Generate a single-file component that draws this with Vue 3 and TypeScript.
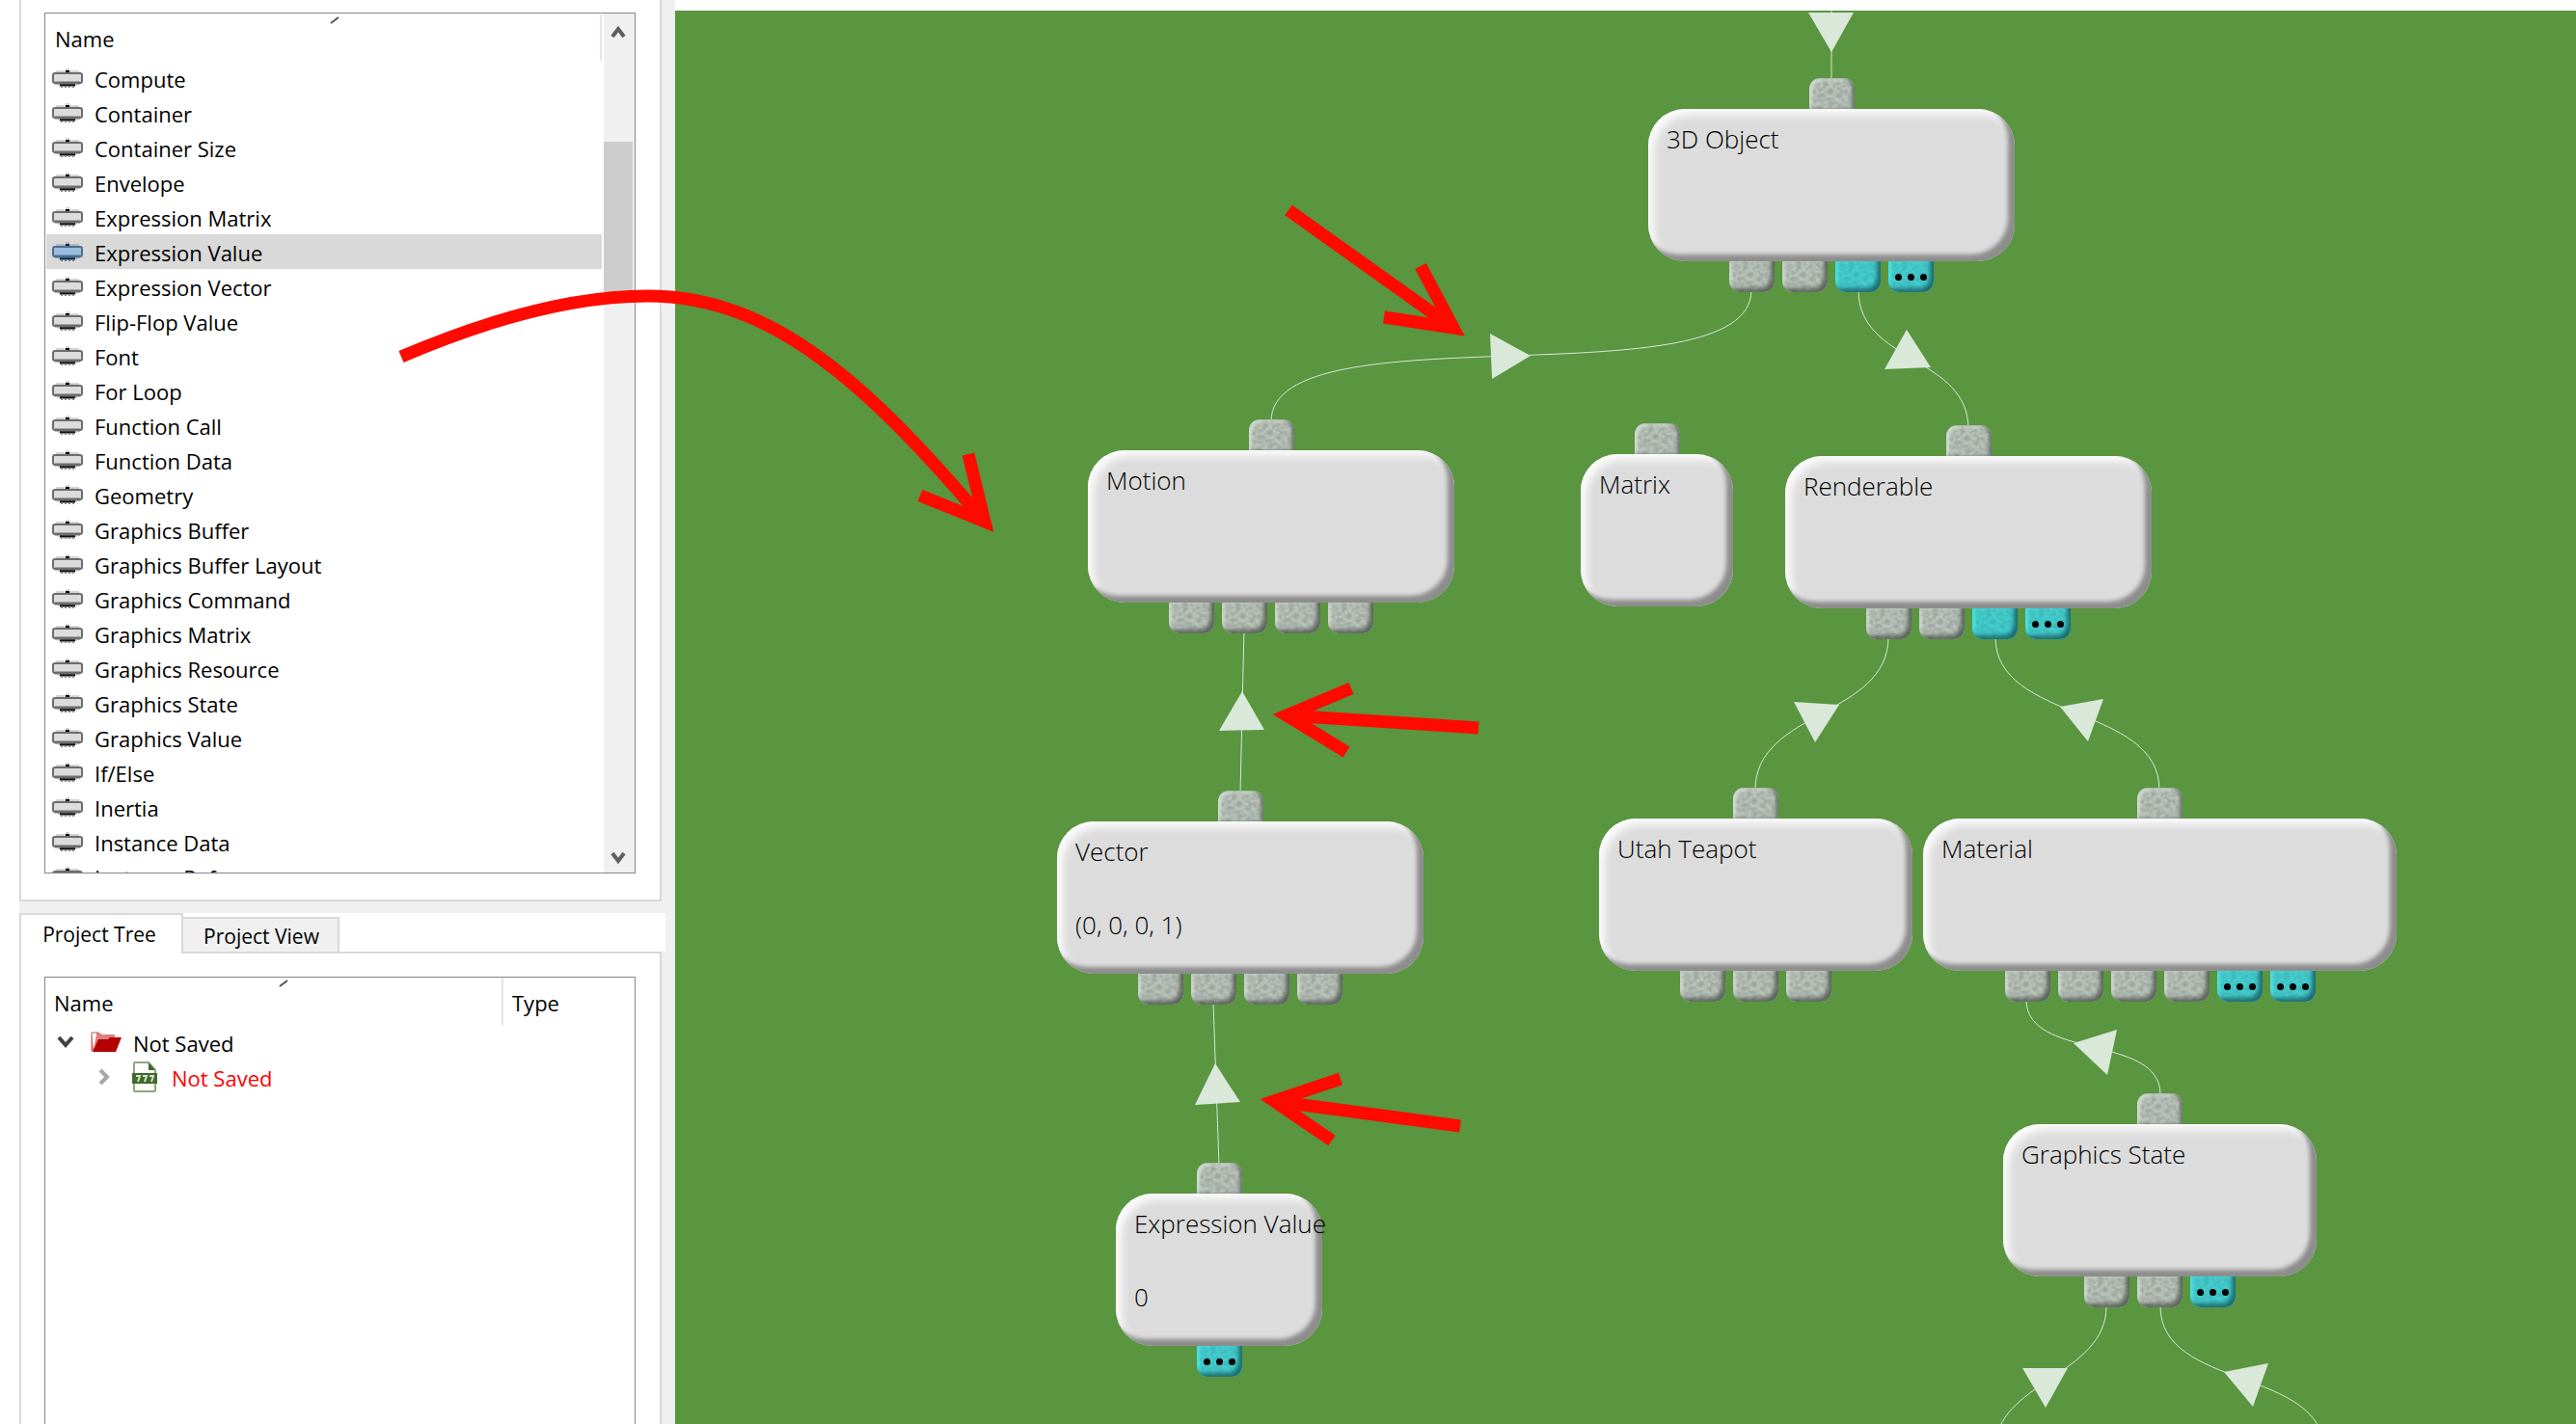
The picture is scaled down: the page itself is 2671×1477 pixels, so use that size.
<script setup lang="ts">
import { ref } from 'vue'

interface GraphNode {
  x: number
  y: number
  w: number
  title: string
  value?: string
  ports: string
}

interface Wire {
  from: [number, number]
  to: [number, number]
  bend: number
  arrow: string
}

const components: string[] = [
  'Compute', 'Container', 'Container Size', 'Envelope', 'Expression Matrix',
  'Expression Value', 'Expression Vector', 'Flip-Flop Value', 'Font', 'For Loop',
  'Function Call', 'Function Data', 'Geometry', 'Graphics Buffer',
  'Graphics Buffer Layout', 'Graphics Command', 'Graphics Matrix',
  'Graphics Resource', 'Graphics State', 'Graphics Value', 'If/Else', 'Inertia',
  'Instance Data', 'Instance Reference',
]
const selected = ref('Expression Value')
const tab = ref<'tree' | 'view'>('tree')

// Port codes: g = grey, c = cyan, m = cyan with more-dots
const nodes: GraphNode[] = [
  { x: 1009, y: 102, w: 380, title: '3D Object', ports: 'ggcm' },
  { x: 428, y: 456, w: 380, title: 'Motion', ports: 'gggg' },
  { x: 939, y: 460, w: 158, title: 'Matrix', ports: '' },
  { x: 1151, y: 462, w: 380, title: 'Renderable', ports: 'ggcm' },
  { x: 396, y: 841, w: 380, title: 'Vector', value: '(0, 0, 0, 1)', ports: 'gggg' },
  { x: 958, y: 838, w: 325, title: 'Utah Teapot', ports: 'ggg' },
  { x: 1294, y: 838, w: 491, title: 'Material', ports: 'ggggmm' },
  { x: 457, y: 1227, w: 214, title: 'Expression Value', value: '0', ports: 'm' },
  { x: 1377, y: 1155, w: 325, title: 'Graphics State', ports: 'ggm' },
]

const wires: Wire[] = [
  { from: [1199, 80], to: [1199, -20], bend: 0, arrow: '1175,2 1222,2 1199,43' },
  { from: [618, 426], to: [1116, 290], bend: 118, arrow: '845,335 887,358 847,382' },
  { from: [1341, 434], to: [1227, 290], bend: 76, arrow: '1277,331 1254,372 1302,370' },
  { from: [586, 812], to: [590, 640], bend: 0, arrow: '588,706 564,747 611,746' },
  { from: [1120, 808], to: [1258, 650], bend: 82, arrow: '1160,717 1207,720 1182,759' },
  { from: [1539, 808], to: [1369, 650], bend: 88, arrow: '1436,722 1481,714 1465,758' },
  { from: [564, 1198], to: [558, 1028], bend: 0, arrow: '560,1092 586,1132 539,1135' },
  { from: [1540, 1124], to: [1401, 1026], bend: 63, arrow: '1450,1071 1495,1057 1485,1104' },
  { from: [1368, 1494], to: [1484, 1344], bend: 72, arrow: '1397,1408 1444,1408 1421,1449' },
  { from: [1710, 1494], to: [1540, 1344], bend: 87, arrow: '1606,1412 1652,1403 1636,1448' },
]

function wirePath(w: Wire): string {
  const [x1, y1] = w.from
  const [x2, y2] = w.to
  return `M${x1} ${y1}C${x1} ${y1 - w.bend} ${x2} ${y2 + w.bend} ${x2} ${y2}`
}
</script>

<template>
  <div class="page">
    <svg class="defs" width="0" height="0" aria-hidden="true">
      <filter id="stone" x="0" y="0" width="1" height="1">
        <feTurbulence type="fractalNoise" baseFrequency="0.2 0.24" numOctaves="2" seed="4" />
        <feColorMatrix values="0 0 0 0 0  0 0 0 0 0  0 0 0 0 0  1 0 0 0 -0.3" />
      </filter>
    </svg>

    <aside class="sidebar">
      <section class="dock dock-top">
        <div class="box list-box">
          <div class="list-main">
            <div class="list-head">
              <span>Name</span>
              <svg class="sort" width="12" height="8" viewBox="0 0 12 8"><path d="M2 7 L10 1" stroke="#555" stroke-width="2" /></svg>
            </div>
            <ul class="items" role="listbox" aria-label="Components">
              <li
                v-for="name in components"
                :key="name"
                role="option"
                :aria-selected="name === selected"
                :class="{ on: name === selected }"
                @click="selected = name"
              >
                <svg class="chip" width="32" height="20" viewBox="0 0 32 20">
                  <rect class="halo" x="4" y="2" width="24" height="3" />
                  <rect class="halo" x="14" y="0" width="4" height="2" />
                  <rect class="pin" x="14" y="2" width="4" height="3" />
                  <rect class="halo" x="6" y="17" width="20" height="1" />
                  <path class="teeth" d="M8 17h16" />
                  <path class="teeth faint" d="M9 19h14" />
                  <rect class="body" x="1" y="5" width="30" height="10" rx="2" />
                  <path class="under" d="M3 15h26" />
                </svg>
                <span>{{ name }}</span>
              </li>
            </ul>
          </div>
          <div class="scroll">
            <button type="button" aria-label="Scroll up">
              <svg width="16" height="14" viewBox="0 0 16 14"><path d="M2 12 L8 4 L14 12" /></svg>
            </button>
            <div class="track"><div class="thumb"></div></div>
            <button type="button" aria-label="Scroll down">
              <svg width="16" height="14" viewBox="0 0 16 14"><path d="M2 2 L8 10 L14 2" /></svg>
            </button>
          </div>
        </div>
      </section>

      <section class="lower">
        <div class="tabs" role="tablist">
          <button type="button" role="tab" class="tab tab-tree" :aria-selected="tab === 'tree'" @click="tab = 'tree'">Project Tree</button>
          <button type="button" role="tab" class="tab tab-view" :aria-selected="tab === 'view'" @click="tab = 'view'">Project View</button>
        </div>
        <div class="dock dock-bottom">
          <div class="box tree-box">
            <table class="tree">
              <thead>
                <tr>
                  <th class="name-col">
                    Name
                    <svg class="sort" width="12" height="8" viewBox="0 0 12 8"><path d="M2 7 L10 1" stroke="#555" stroke-width="2" /></svg>
                  </th>
                  <th>Type</th>
                </tr>
              </thead>
              <tbody>
                <tr>
                  <td>
                    <div class="entry">
                      <svg class="caret" width="18" height="14" viewBox="0 0 18 14"><path d="M2 2 L9 10 L16 2" fill="none" stroke="#404040" stroke-width="4" /></svg>
                      <svg class="folder" width="32" height="22" viewBox="0 0 32 22">
                        <path d="M1 21V1h8l3 2h13v4" fill="#d98080" />
                        <path d="M1 1h5v2L3 18z" fill="#fff" />
                        <path d="M1 20V1h7" fill="none" stroke="#c55" stroke-width="1" />
                        <path d="M8 8h10l2-2h12l-6 15H2z" fill="#b30000" />
                      </svg>
                      <span>Not Saved</span>
                    </div>
                  </td>
                  <td></td>
                </tr>
                <tr>
                  <td>
                    <div class="entry child">
                      <svg class="caret" width="14" height="18" viewBox="0 0 14 18"><path d="M3 2 L10 9 L3 16" fill="none" stroke="#a6a6a6" stroke-width="4" /></svg>
                      <svg class="file" width="28" height="32" viewBox="0 0 28 32">
                        <path d="M4 1h14l7 8v21a1 1 0 0 1-1 1H4a1 1 0 0 1-1-1V2a1 1 0 0 1 1-1z" fill="#fff" stroke="#8fa67d" stroke-width="2" />
                        <path d="M18 1v8h7z" fill="#3d6b2a" />
                        <rect x="1" y="12" width="26" height="11" fill="#3d6b2a" />
                        <path d="M5 15h4l-2 6M12 15h4l-2 6M19 15h4l-2 6" fill="none" stroke="#d5e2cd" stroke-width="2" />
                      </svg>
                      <span class="unsaved">Not Saved</span>
                    </div>
                  </td>
                  <td></td>
                </tr>
              </tbody>
            </table>
          </div>
        </div>
      </section>
    </aside>

    <main class="canvas">
      <svg class="wires" aria-hidden="true">
        <g v-for="(w, i) in wires" :key="i">
          <path :d="wirePath(w)" />
          <polygon :points="w.arrow" />
        </g>
      </svg>
      <article
        v-for="n in nodes"
        :key="n.title"
        class="node"
        :style="{ left: n.x + 'px', top: n.y + 'px', width: n.w + 'px' }"
      >
        <div class="ports up">
          <span class="port g"><svg><rect width="100%" height="100%" filter="url(#stone)" /></svg></span>
        </div>
        <h2>{{ n.title }}</h2>
        <p v-if="n.value">{{ n.value }}</p>
        <div class="ports down">
          <span v-for="(p, i) in n.ports" :key="i" class="port" :class="p">
            <svg><rect width="100%" height="100%" filter="url(#stone)" /></svg>
            <span v-if="p === 'm'" class="dots"><i></i><i></i><i></i></span>
          </span>
        </div>
      </article>
    </main>

    <svg class="notes" aria-hidden="true">
      <path d="M416 370C500 334 590 307 672 307C800 307 900 398 1021 541" />
      <path d="M1004 471L1021 541L954 514" />
      <path d="M1336 218L1507 340M1473 276L1507 340L1435 329" />
      <path d="M1533 755L1334 742M1401 714L1334 742L1396 780" />
      <path d="M1514 1168L1321 1142M1390 1119L1321 1142L1381 1183" />
    </svg>
  </div>
</template>

<style>
body {
  margin: 0;
  background: #fff;
  overflow: hidden;
}
</style>

<style scoped>
.page {
  position: relative;
  display: flex;
  height: 100vh;
  overflow: hidden;
  font-family: "Open Sans", "Noto Sans", sans-serif;
  font-size: 22px;
  line-height: 36px;
  color: #000;
}
.defs {
  position: absolute;
}
.sidebar {
  flex: none;
  box-sizing: border-box;
  width: 680px;
  margin-left: 20px;
  padding-right: 14px;
  background: #f0f0f0;
  display: grid;
  grid-template-columns: minmax(0, 1fr);
  grid-template-rows: minmax(0, 935fr) minmax(0, 530fr);
  gap: 12px;
}
.dock {
  box-sizing: border-box;
  background: #fff;
  border: 2px solid #d9d9d9;
  padding: 24px 25px 0 24px;
  display: flex;
}
.dock-top {
  border-top: 0;
  padding-top: 13px;
  padding-bottom: 27px;
}
.lower {
  display: flex;
  flex-direction: column;
}
.dock-bottom {
  flex: 1;
  min-height: 0;
  border-bottom: 0;
}
.box {
  flex: 1;
  min-width: 0;
  border: 1px solid #828790;
  overflow: hidden;
}
.tree-box {
  border-bottom: 0;
}
.list-box {
  display: flex;
}
.list-main {
  flex: 1;
  min-width: 0;
  padding: 1px 2px 0 1px;
}
.list-head {
  position: relative;
  box-sizing: border-box;
  height: 48px;
  padding: 7px 0 0 9px;
  border-right: 2px solid #e5e5e5;
}
.sort {
  position: absolute;
  left: 51%;
  top: 2px;
}
.items {
  margin: 0;
  padding: 0;
  list-style: none;
}
.items li {
  display: flex;
  align-items: center;
  gap: 12px;
  height: 36px;
  padding-left: 6px;
  white-space: nowrap;
}
.items li.on {
  background: #d9d9d9;
}
.items span {
  padding-top: 2px;
}
.halo { fill: #d4d4d4; }
.pin { fill: #000; }
.body { fill: #dcdcdc; stroke: #6c6c6c; stroke-width: 2; }
.under { stroke: #6c6c6c; stroke-width: 3; }
.teeth { stroke: #111; stroke-width: 3; }
.faint { stroke: #888; stroke-width: 2; stroke-dasharray: 2 2; }
.on .halo { fill: #b5b5b5; }
.on .pin { fill: #0d2740; }
.on .body { fill: #9abde0; stroke: #4b6d90; }
.on .under { stroke: #4b6d90; }
.on .teeth { stroke: #0d2740; }
.on .faint { stroke: #6d7f90; }
.scroll {
  width: 32px;
  background: #f0f0f0;
  display: flex;
  flex-direction: column;
}
.scroll button {
  height: 34px;
  padding: 3px 2px 0 0;
  border: 0;
  background: none;
  line-height: 0;
}
.scroll path {
  fill: none;
  stroke: #5f5f5f;
  stroke-width: 4;
}
.track {
  flex: 1;
  padding-top: 99px;
}
.thumb {
  width: 30px;
  height: 156px;
  background: #cdcdcd;
}
.tabs {
  display: flex;
  height: 40px;
  margin-right: -4px;
  background: #fff;
}
.tab {
  box-sizing: border-box;
  font: 21px/28px "Open Sans", "Noto Sans", sans-serif;
  color: #000;
  border: 2px solid #d9d9d9;
  border-bottom: 0;
  white-space: nowrap;
}
.tab-tree {
  position: relative;
  width: 170px;
  height: 42px;
  padding: 6px 4px 6px 0;
  background: #fff;
}
.tab-view {
  width: 162px;
  height: 36px;
  margin-top: 4px;
  padding: 4px 0 2px 2px;
  border-left: 0;
  background: #f0f0f0;
}
.tree {
  width: 100%;
  border-collapse: collapse;
}
.tree th {
  position: relative;
  height: 47px;
  padding: 2px 0 0 9px;
  text-align: left;
  font-weight: 400;
}
.tree .name-col {
  width: 464px;
  border-right: 2px solid #e5e5e5;
}
.tree td {
  padding: 0;
}
.entry {
  display: flex;
  align-items: center;
  height: 36px;
  padding-left: 12px;
}
.entry span {
  padding-top: 1px;
}
.folder {
  margin: 0 12px 0 17px;
}
.child {
  padding-left: 54px;
}
.file {
  margin: 0 14px 0 21px;
}
.unsaved {
  color: #f00;
}
.canvas {
  position: relative;
  flex: 1;
  min-width: 0;
  margin-top: 11px;
  background: #5a953f;
  overflow: hidden;
}
.wires,
.notes {
  position: absolute;
  left: 0;
  top: 0;
  width: 100%;
  height: 100%;
  pointer-events: none;
}
.wires path {
  fill: none;
  stroke: #d9e8d9;
  stroke-width: 1;
}
.wires polygon {
  fill: #d9e8d9;
}
.notes path {
  fill: none;
  stroke: #ff0a00;
  stroke-width: 13;
}
.node {
  position: absolute;
  box-sizing: border-box;
  height: 158px;
  padding: 12px 0 0 19px;
  border-radius: 38px;
  background: #dcdcdc;
  box-shadow: inset -7px -7px 4px #8d8d8d, inset 6px 6px 8px #fcfcfc;
}
.node h2,
.node p {
  margin: 0;
  font-size: 26px;
  font-weight: 300;
  line-height: 38px;
  white-space: nowrap;
}
.node p {
  margin-top: 38px;
}
.ports {
  position: absolute;
  left: 0;
  width: 100%;
  display: flex;
  justify-content: center;
  gap: 8px;
}
.up {
  bottom: 100%;
}
.down {
  top: 100%;
}
.port {
  position: relative;
  width: 47px;
  height: 32px;
  background: #b9c3ba;
  overflow: hidden;
}
.port svg {
  display: block;
  width: 100%;
  height: 100%;
  opacity: 0.3;
}
.port::after {
  content: "";
  position: absolute;
  inset: 0;
  border-radius: inherit;
}
.up .port {
  border-radius: 11px 11px 0 0;
}
.up .port::after {
  box-shadow: inset -3px 0 3px rgba(70, 80, 70, 0.6), inset 3px 3px 3px rgba(225, 238, 225, 0.6);
}
.down .port {
  border-radius: 0 0 11px 11px;
}
.down .port::after {
  box-shadow: inset -4px -4px 4px rgba(60, 70, 60, 0.7), inset 3px 0 3px rgba(225, 238, 225, 0.5);
}
.down .c,
.down .m {
  background: #44cdce;
}
.down .c svg,
.down .m svg {
  opacity: 0.2;
}
.down .c::after,
.down .m::after {
  box-shadow: inset -4px -4px 4px rgba(20, 90, 95, 0.8), inset 3px 0 3px rgba(80, 235, 235, 0.7);
}
.dots {
  position: absolute;
  inset: 0;
  display: flex;
  align-items: center;
  justify-content: center;
  gap: 6px;
}
.dots i {
  width: 7px;
  height: 7px;
  border-radius: 50%;
  background: #000;
}
</style>
